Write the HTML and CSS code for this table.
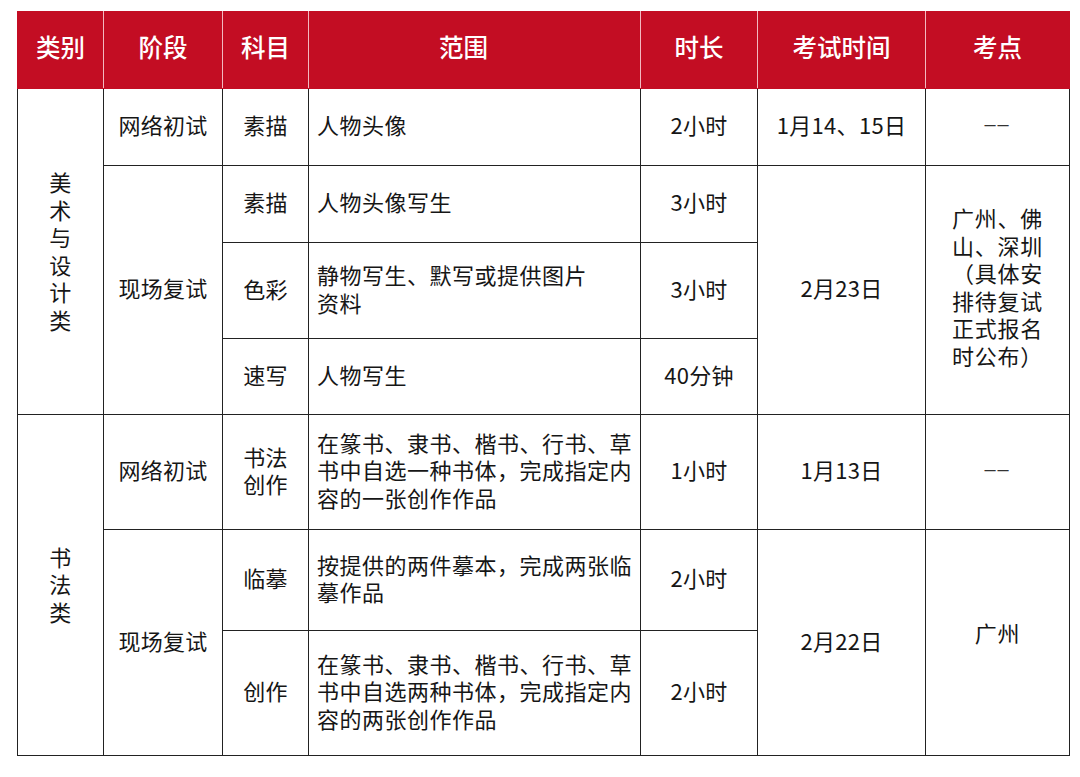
FILE: index.html
```html
<!DOCTYPE html>
<html lang="zh-CN">
<head>
<meta charset="utf-8">
<link rel="stylesheet" href="styles.css">
</head>
<body>
<table class="exam">
  <colgroup>
    <col class="c1"><col class="c2"><col class="c3"><col class="c4"><col class="c5"><col class="c6"><col class="c7">
  </colgroup>
  <thead>
    <tr class="h">
      <th>类别</th><th>阶段</th><th>科目</th><th class="th-range">范围</th><th>时长</th><th>考试时间</th><th>考点</th>
    </tr>
  </thead>
  <tbody>
    <tr class="r1">
      <td rowspan="4" class="vert">美<br>术<br>与<br>设<br>计<br>类</td>
      <td>网络初试</td>
      <td>素描</td>
      <td class="range">人物头像</td>
      <td>2小时</td>
      <td>1月14、15日</td>
      <td class="dash">––</td>
    </tr>
    <tr class="r2">
      <td rowspan="3">现场复试</td>
      <td>素描</td>
      <td class="range">人物头像写生</td>
      <td>3小时</td>
      <td rowspan="3">2月23日</td>
      <td rowspan="3" class="place">广州、佛<br>山、深圳<br>（具体安<br>排待复试<br>正式报名<br>时公布）</td>
    </tr>
    <tr class="r3">
      <td>色彩</td>
      <td class="range">静物写生、默写或提供图片<br>资料</td>
      <td>3小时</td>
    </tr>
    <tr class="r4">
      <td>速写</td>
      <td class="range">人物写生</td>
      <td>40分钟</td>
    </tr>
    <tr class="r5">
      <td rowspan="3" class="vert">书<br>法<br>类</td>
      <td>网络初试</td>
      <td>书法<br>创作</td>
      <td class="range">在篆书、隶书、楷书、行书、草<br>书中自选一种书体，完成指定内<br>容的一张创作作品</td>
      <td>1小时</td>
      <td>1月13日</td>
      <td class="dash">––</td>
    </tr>
    <tr class="r6">
      <td rowspan="2">现场复试</td>
      <td>临摹</td>
      <td class="range">按提供的两件摹本，完成两张临<br>摹作品</td>
      <td>2小时</td>
      <td rowspan="2">2月22日</td>
      <td rowspan="2" class="place place-single">广州</td>
    </tr>
    <tr class="r7">
      <td>创作</td>
      <td class="range">在篆书、隶书、楷书、行书、草<br>书中自选两种书体，完成指定内<br>容的两张创作作品</td>
      <td>2小时</td>
    </tr>
  </tbody>
</table>
</body>
</html>
```
FILE: styles.css
```css
html, body {
  margin: 0;
  padding: 0;
  background: #ffffff;
}
body {
  padding: 11px 0 0 17px;
  font-family: "Noto Sans CJK SC", "Noto Sans", sans-serif;
  color: #161616;
}
.exam {
  border-collapse: collapse;
  table-layout: fixed;
  width: 1052px;
}
.c1 { width: 86px; }
.c2 { width: 119px; }
.c3 { width: 86px; }
.c4 { width: 332px; }
.c5 { width: 117px; }
.c6 { width: 168px; }
.c7 { width: 144px; }

.exam th {
  background: #c30d23;
  color: #ffffff;
  font-size: 24.5px;
  font-weight: 500;
  height: 77px;
  padding: 0 0 6px 0;
  border-left: 1px solid #f2b9c0;
  border-right: 1px solid #f2b9c0;
  border-top: none;
  border-bottom: 1.5px solid #c30d23;
  box-sizing: border-box;
}
.exam th:first-child { border-left: 1.5px solid #c30d23; }
.exam th:last-child { border-right: 1.5px solid #c30d23; }
.exam .th-range { padding-right: 22px; }

.exam td {
  border: 1.5px solid #222222;
  font-size: 22px;
  line-height: 27.5px;
  text-align: center;
  vertical-align: middle;
  padding: 0 4px 3px 4px;
  letter-spacing: 0.3px;
}
.exam td.range {
  text-align: left;
  padding: 0 4px 3px 8px;
  letter-spacing: 0.5px;
}
.exam td.vert { padding-top: 2px; }
.exam td.place { padding: 0 6px 6px 6px; letter-spacing: 0.8px; }
.exam td.place-single { padding-bottom: 18px; }
.exam td.dash {
  font-family: "Liberation Sans", sans-serif;
  font-size: 20px;
  color: #333333;
  letter-spacing: 2px;
}

.r1 { height: 77px; }
.r2 { height: 77px; }
.r3 { height: 96px; }
.r4 { height: 76px; }
.r5 { height: 115px; }
.r6 { height: 101px; }
.r7 { height: 125px; }
```
